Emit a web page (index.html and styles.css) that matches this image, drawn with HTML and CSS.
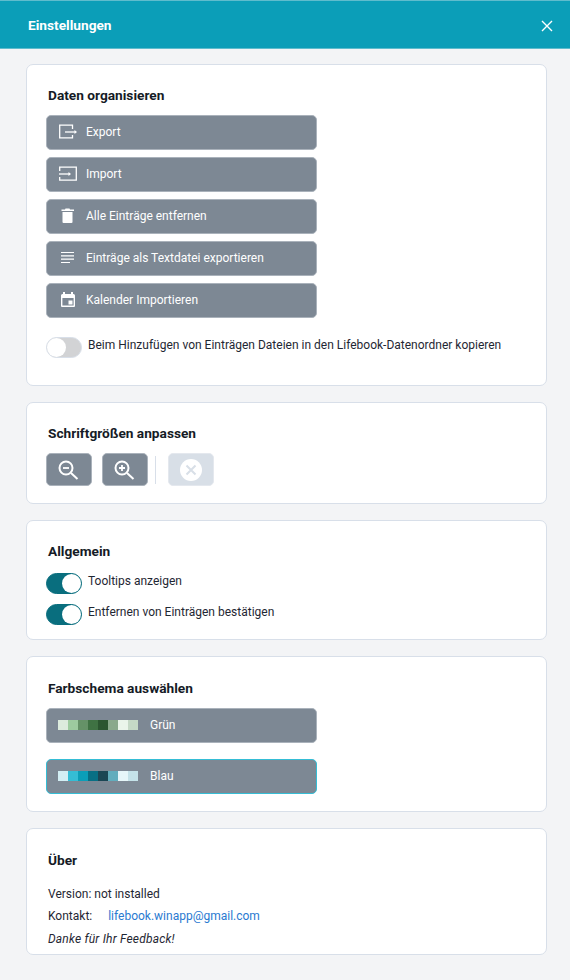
FILE: index.html
```html
<!DOCTYPE html>
<html lang="de">
<head>
    <meta charset="UTF-8">
    <title>Einstellungen</title>
    <link rel="stylesheet" href="styles.css">
</head>
<body>
    <header class="topbar">
        <span class="topbar-title">Einstellungen</span>
        <svg class="close-icon" viewBox="0 0 12 12" width="12" height="12"><path d="M1 1l10 10M11 1L1 11" stroke="#fff" stroke-width="1.4" fill="none"/></svg>
    </header>

    <main class="content">
        <section class="card card-data">
            <h2>Daten organisieren</h2>
            <div class="btn-list">
                <button class="btn">
                    <svg class="btn-icon" viewBox="0 0 20 16" width="20" height="16"><path d="M13.500 5V1.200H.7v12.600h12.800V11" stroke="#fff" stroke-width="1.300" fill="none"/><path d="M6 8h10" stroke="#fff" stroke-width="1.300"/><path d="M15.500 6L18 8l-2.500 2z" fill="#fff"/></svg>
                    Export
                </button>
                <button class="btn">
                    <svg class="btn-icon" viewBox="0 0 20 16" width="20" height="16"><path d="M.7 5V1.200h16.600v13H.7V11" stroke="#fff" stroke-width="1.300" fill="none"/><path d="M0 8h10" stroke="#fff" stroke-width="1.300"/><path d="M9.500 6L12 8l-2.500 2z" fill="#fff"/></svg>
                    Import
                </button>
                <button class="btn">
                    <svg class="btn-icon" viewBox="0 0 20 16" width="20" height="16"><path d="M5.500.5h4l.5 1h4v1.500H1.500V1.500h3.500z" fill="#fff" transform="translate(1 0)"/><path d="M3.500 4h10v10a1 1 0 0 1-1 1h-8a1 1 0 0 1-1-1z" fill="#fff"/></svg>
                    Alle Einträge entfernen
                </button>
                <button class="btn">
                    <svg class="btn-icon" viewBox="0 0 20 16" width="20" height="16"><path d="M2 2.500h13M2 5.800h13M2 9.200h13M2 12.500h9" stroke="#fff" stroke-width="1.200"/></svg>
                    Einträge als Textdatei exportieren
                </button>
                <button class="btn">
                    <svg class="btn-icon" viewBox="0 0 20 16" width="20" height="16"><path fill-rule="evenodd" d="M4 0h2v2h6V0h2v2h.5A1.500 1.500 0 0 1 16 3.500V14a1 1 0 0 1-1 1H3a1 1 0 0 1-1-1V3.500A1.500 1.500 0 0 1 3.500 2H4zM3.400 6v7.600h11.200V6z" fill="#fff"/><path d="M9.500 8.500h4v4h-4z" fill="#fff"/></svg>
                    Kalender Importieren
                </button>
            </div>
            <div class="toggle-row toggle-row-data">
                <span class="toggle"></span>
                <span>Beim Hinzufügen von Einträgen Dateien in den Lifebook-Datenordner kopieren</span>
            </div>
        </section>

        <section class="card card-font">
            <h2>Schriftgrößen anpassen</h2>
            <div class="font-tools">
                <button class="btn-square">
                    <svg viewBox="0 0 22 22" width="22" height="22"><circle cx="8" cy="9" r="6.500" stroke="#fff" stroke-width="2" fill="none"/><path d="M13 14l6.500 6" stroke="#fff" stroke-width="2"/><path d="M5 9h6" stroke="#fff" stroke-width="1.800"/></svg>
                </button>
                <button class="btn-square">
                    <svg viewBox="0 0 22 22" width="22" height="22"><circle cx="8" cy="9" r="6.500" stroke="#fff" stroke-width="2" fill="none"/><path d="M13 14l6.500 6" stroke="#fff" stroke-width="2"/><path d="M5 9h6M8 6v6" stroke="#fff" stroke-width="1.800"/></svg>
                </button>
                <span class="tool-divider"></span>
                <button class="btn-square btn-disabled">
                    <svg viewBox="0 0 22 22" width="22" height="22"><circle cx="11" cy="11" r="11" fill="#fff"/><path d="M6.500 6.500l9 9M15.500 6.500l-9 9" stroke="#d8dfe7" stroke-width="2"/></svg>
                </button>
            </div>
        </section>

        <section class="card card-general">
            <h2>Allgemein</h2>
            <div class="toggle-row">
                <span class="toggle on"></span>
                <span>Tooltips anzeigen</span>
            </div>
            <div class="toggle-row">
                <span class="toggle on"></span>
                <span>Entfernen von Einträgen bestätigen</span>
            </div>
        </section>

        <section class="card card-theme">
            <h2>Farbschema auswählen</h2>
            <button class="btn btn-theme">
                <span class="swatches">
                    <i style="background:#dcebdd"></i><i style="background:#9dcb9f"></i><i style="background:#659267"></i><i style="background:#3f7243"></i><i style="background:#2b5630"></i><i style="background:#8aa98c"></i><i style="background:#eaf5ea"></i><i style="background:#c5d9c6"></i>
                </span>
                Grün
            </button>
            <button class="btn btn-theme active">
                <span class="swatches">
                    <i style="background:#d3eef4"></i><i style="background:#35bdd5"></i><i style="background:#0b9eb8"></i><i style="background:#086f84"></i><i style="background:#1b4654"></i><i style="background:#62adbd"></i><i style="background:#e6f6f9"></i><i style="background:#c4e2e9"></i>
                </span>
                Blau
            </button>
        </section>

        <section class="card card-about">
            <h2>Über</h2>
            <p>Version: not installed</p>
            <p>Kontakt: <a href="#">lifebook.winapp@gmail.com</a></p>
            <p><em>Danke für Ihr Feedback!</em></p>
        </section>
    </main>
</body>
</html>
```

FILE: styles.css
```css
* {
    box-sizing: border-box;
}
body {
    margin: 0;
    background: #f3f4f6;
    color: #1f2733;
    font-family: Roboto, "Noto Sans", sans-serif;
    font-size: 12px;
}
.topbar {
    height: 49px;
    display: flex;
    align-items: center;
    justify-content: space-between;
    padding: 0 17px 0 28px;
    background: #0b9eb8;
    border: 1px solid #5fbccd;
    border-width: 1px 0;
    color: #fff;
}
.topbar-title {
    font-size: 13.7px;
    font-weight: 700;
}
.close-icon {
    margin-top: 3px;
}
.content {
    display: flex;
    flex-direction: column;
    gap: 16px;
    padding: 15px 23px 0 26px;
}
.card {
    background: #fff;
    border: 1px solid #d8dfe9;
    border-radius: 7px;
    padding: 21px 19px 0;
}
.card h2 {
    margin: 0 0 11px 2px;
    font-size: 13.7px;
    line-height: 18px;
    font-weight: 700;
    color: #151b26;
}
.card-data { height: 322px; }
.card-font { height: 102px; }
.card-general { height: 120px; }
.card-theme { height: 156px; padding-top: 22px; }
.card-about { height: 127px; padding-top: 22px; }

.card-general h2 {
    margin-bottom: 13px;
}
.card-about h2 {
    margin-bottom: 15.5px;
}

.btn-list {
    display: flex;
    flex-direction: column;
    gap: 7px;
}
.btn {
    display: flex;
    align-items: center;
    width: 271px;
    height: 35px;
    padding: 0 0 1px 12px;
    background: #7d8894;
    border: 1px solid #aab2bb;
    border-radius: 5px;
    color: #fff;
    font: inherit;
    text-align: left;
}
.btn-icon {
    margin-right: 7px;
    flex: none;
}
.toggle-row {
    display: flex;
    align-items: flex-start;
    gap: 6px;
    margin-bottom: 10px;
    line-height: 16px;
    color: #1f2733;
}
.toggle-row-data {
    margin-top: 19px;
}
.toggle {
    position: relative;
    flex: none;
    width: 36px;
    height: 21px;
    border-radius: 11px;
    background: #d2d3d5;
    border: 1px solid #d8dfe9;
}
.toggle::after {
    content: "";
    position: absolute;
    left: 0;
    top: 0;
    width: 19px;
    height: 19px;
    border-radius: 50%;
    background: #fff;
}
.toggle.on {
    background: #096e7e;
    border-color: #096e7e;
}
.toggle.on::after {
    left: 15px;
}
.font-tools {
    display: flex;
    align-items: center;
}
.btn-square {
    width: 46px;
    height: 33px;
    display: flex;
    align-items: center;
    justify-content: center;
    padding: 0;
    margin-right: 10px;
    background: #7d8894;
    border: 1px solid #aab2bb;
    border-radius: 5px;
}
.btn-disabled {
    background: #d8dfe7;
    border-color: #e4e8ee;
}
.tool-divider {
    width: 1px;
    height: 28px;
    background: #d8dfe9;
    margin: 0 12px 0 -3px;
}
.btn-theme {
    margin-bottom: 16px;
}
.btn-theme.active {
    border-color: #35bdd5;
}
.swatches {
    display: flex;
    margin: 0 12px 0 -1px;
}
.swatches i {
    display: block;
    width: 10px;
    height: 10px;
}
.card-about p {
    margin: 0 0 4.5px 2px;
    line-height: 18px;
}
.card-about em {
    letter-spacing: 0.2px;
}
.card-about a {
    color: #2a7ad1;
    text-decoration: none;
    margin-left: 13px;
}
```
